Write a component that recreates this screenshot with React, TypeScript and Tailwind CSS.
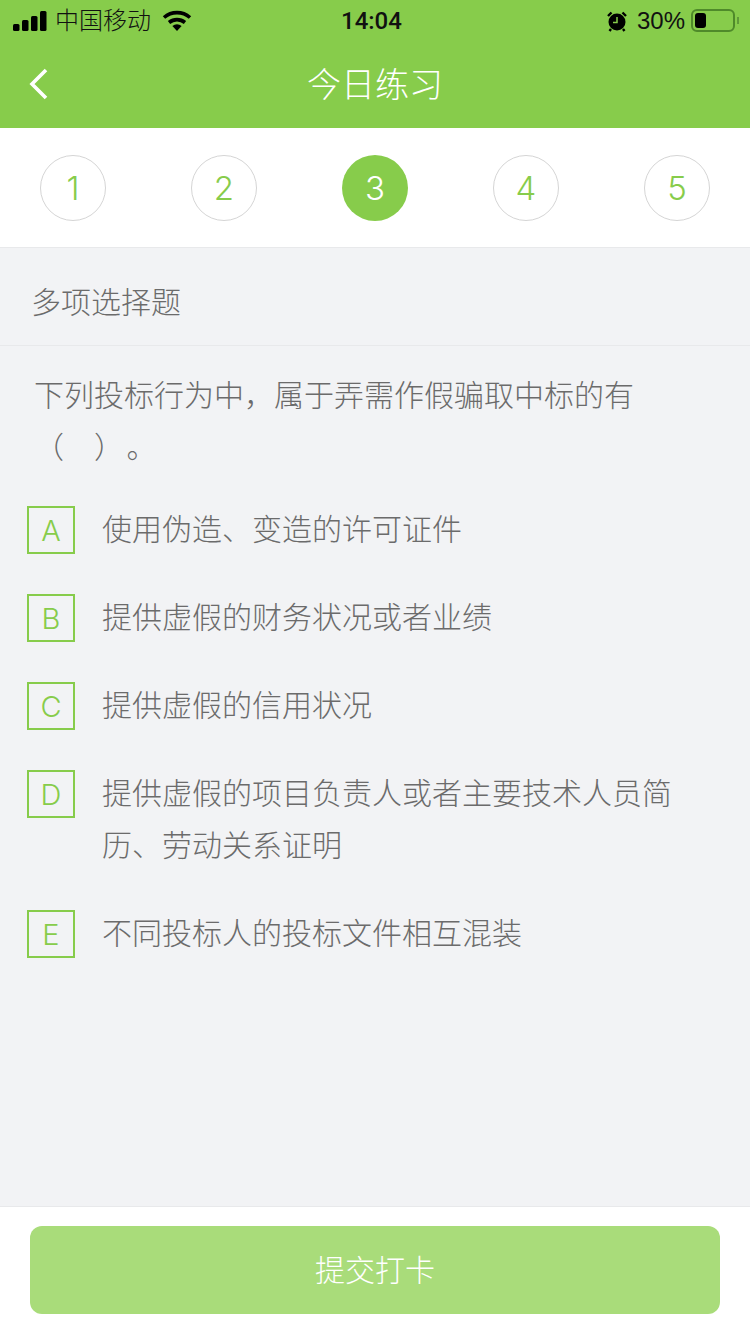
import React from 'react';

const steps = [1, 2, 3, 4, 5];

const options = [
  { key: 'A', text: '使用伪造、变造的许可证件' },
  { key: 'B', text: '提供虚假的财务状况或者业绩' },
  { key: 'C', text: '提供虚假的信用状况' },
  { key: 'D', text: '提供虚假的项目负责人或者主要技术人员简历、劳动关系证明' },
  { key: 'E', text: '不同投标人的投标文件相互混装' },
];

function StatusBar() {
  return (
    <div className="h-10 flex items-center justify-between text-[24px] text-[#111] relative">
      <div className="flex items-center pl-[13px] pt-[1px]">
        <svg width="34" height="20" viewBox="0 0 34 20" fill="#000">
          <rect x="0" y="13" width="6.5" height="7" rx="1.5" />
          <rect x="9" y="9" width="6.5" height="11" rx="1.5" />
          <rect x="18" y="5" width="6.5" height="15" rx="1.5" />
          <rect x="27" y="0" width="6.5" height="20" rx="1.5" />
        </svg>
        <span className="ml-[8px] leading-none">中国移动</span>
        <svg className="ml-[11px]" width="30" height="22" viewBox="0 0 30 22" fill="none" stroke="#000" strokeWidth="3.6">
          <path d="M2 7.5C9.5 1 20.5 1 28 7.5" />
          <path d="M7 12.5C11.8 8.6 18.2 8.6 23 12.5" />
          <path d="M15 21l-4.6-5a7 7 0 0 1 9.2 0z" fill="#000" stroke="none" />
        </svg>
      </div>
      <span className="absolute left-[341px] top-[6px] text-[24px] leading-[30px] font-medium font-['Roboto']">14:04</span>
      <div className="flex items-center pr-[11px] pt-[1px]">
        <svg width="22" height="22" viewBox="0 0 22 22">
          <path d="M2 6L5.5 2.5M20 6L16.5 2.5M5 19l-1.5 2M17 19l1.5 2" stroke="#000" strokeWidth="2.4" />
          <circle cx="11" cy="12" r="8.5" fill="#000" />
          <path d="M11 7v5.5H7" stroke="#87cc4b" strokeWidth="1.5" fill="none" />
        </svg>
        <span className="ml-[9px] leading-none">30%</span>
        <div className="ml-[6px] w-[44px] h-[23px] rounded-[6px] border-2 border-[#4f8a2a] p-[2px]">
          <div className="w-[11px] h-full rounded-[3px] bg-black" />
        </div>
        <div className="ml-[2px] w-[2px] h-[7px] bg-[#5f9a38]" />
      </div>
    </div>
  );
}

export default function App() {
  return (
    <div className="w-[750px] h-[1334px] flex flex-col bg-[#f2f3f5] font-['Liberation_Sans','Noto_Sans_CJK_SC',sans-serif] font-light">
      <div className="h-[128px] bg-[#87cc4b]">
        <StatusBar />
        <div className="h-[88px] flex items-center justify-center relative pt-[3px]">
          <svg className="absolute left-[29px] top-[28px]" width="20" height="32" viewBox="0 0 20 32" fill="none" stroke="#fff" strokeWidth="3.6">
            <path d="M17 2L3 16l14 14" />
          </svg>
          <span className="text-[34px] text-white">今日练习</span>
        </div>
      </div>

      <div className="h-[120px] bg-white border-b border-[#e8e9eb] flex items-center justify-between px-[40px]">
        {steps.map((n) => (
          <div
            key={n}
            className={
              n === 3
                ? "w-[66px] h-[66px] pt-[2px] rounded-full bg-[#87cc4b] text-white flex items-center justify-center text-[33px] font-['Inter'] font-light"
                : "w-[66px] h-[66px] pt-[2px] rounded-full border border-[#d5d5d5] text-[#87cc4b] flex items-center justify-center text-[33px] font-['Inter'] font-light"
            }
          >
            {n}
          </div>
        ))}
      </div>

      <div className="h-[98px] border-b border-[#e8e9eb] flex items-center pl-[31px] pt-[12px] text-[30px] text-[#6b6b6b]">
        多项选择题
      </div>

      <div className="flex-1">
        <div className="pl-[34px] pr-[100px] pt-[24px] text-[30px] leading-[52px] text-[#6b6b6b]">
          下列投标行为中，属于弄需作假骗取中标的有（　）&#8202;。
        </div>

        <div className="mt-[30px] flex flex-col">
          {options.map((o) => (
            <div key={o.key} className="flex pl-[27px] pr-[70px] pb-[36px]">
              <div className="w-[48px] h-[48px] pt-[2px] mt-[2px] shrink-0 border-2 border-[#87cc4b] text-[#87cc4b] flex items-center justify-center text-[29px] font-['Inter'] font-light">
                {o.key}
              </div>
              <div className="ml-[27px] text-[30px] leading-[52px] text-[#6b6b6b]">{o.text}</div>
            </div>
          ))}
        </div>
      </div>

      <div className="h-[128px] bg-white border-t border-[#e8e9eb] px-[30px] pt-[19px]">
        <button type="button" className="w-full h-[88px] rounded-[12px] bg-[#a9dc7a] text-white text-[30px]">
          提交打卡
        </button>
      </div>
    </div>
  );
}
